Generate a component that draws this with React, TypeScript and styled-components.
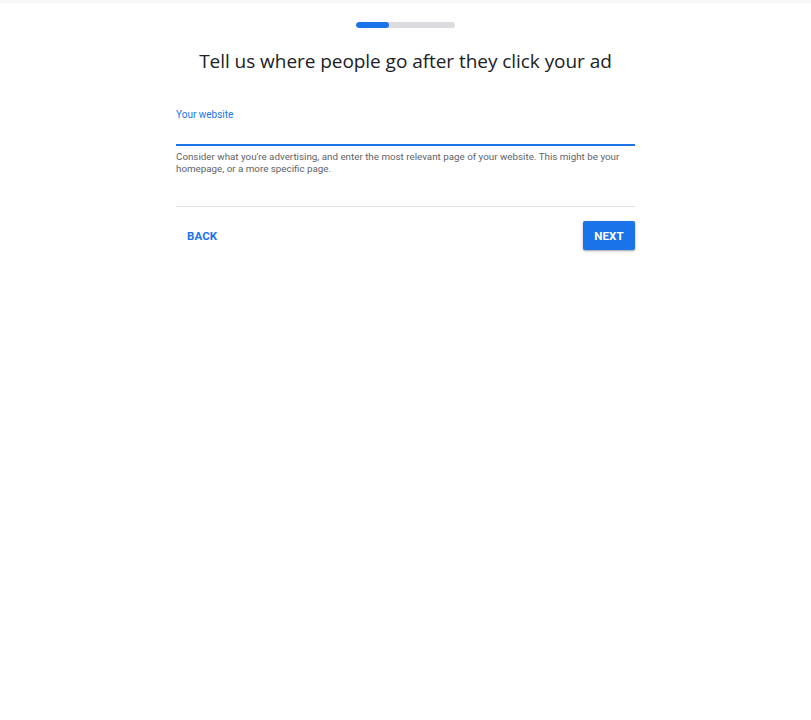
import React from "react";
import styled, { createGlobalStyle } from "styled-components";

const Global = createGlobalStyle`
  html, body { margin: 0; padding: 0; background: #fff; }
  body { font-family: Roboto, "Liberation Sans", Arial, sans-serif; }
`;

const Page = styled.div`
  min-height: 720px;
  display: flex;
  flex-direction: column;
  align-items: center;
  border-top: 3px solid #f6f6f6;
  box-sizing: border-box;
`;

const Progress = styled.div`
  margin-top: 19px;
  width: 99px;
  height: 6px;
  border-radius: 3px;
  background: #dadce0;
  overflow: hidden;
  display: flex;
`;

const ProgressFill = styled.div`
  height: 100%;
  background: #1a73e8;
  border-radius: 3px;
`;

const Title = styled.h1`
  margin: 19px 0 0;
  font-family: "Open Sans", Roboto, sans-serif;
  font-weight: 400;
  font-size: 19px;
  line-height: 28px;
  color: #202124;
  letter-spacing: -0.05px;
`;

const Content = styled.div`
  width: 459px;
  margin-top: 33px;
  display: flex;
  flex-direction: column;
`;

const Label = styled.label`
  font-size: 10px;
  line-height: 14px;
  color: #1a73e8;
`;

const Input = styled.input`
  display: block;
  box-sizing: border-box;
  margin-top: 4px;
  border: none;
  border-bottom: 2px solid #1a73e8;
  height: 20px;
  padding: 0;
  outline: none;
  font: inherit;
  background: transparent;
`;

const Helper = styled.p`
  margin: 5px 0 0;
  font-size: 9.8px;
  line-height: 12px;
  color: #5f6368;
`;

const Divider = styled.div`
  margin-top: 31px;
  height: 1px;
  background: #e0e0e0;
`;

const Actions = styled.div`
  margin-top: 14px;
  display: flex;
  justify-content: space-between;
  align-items: center;
`;

const TextButton = styled.button`
  border: none;
  background: transparent;
  color: #1a73e8;
  font-family: Roboto, sans-serif;
  font-weight: 700;
  font-size: 11.5px;
  letter-spacing: 0.1px;
  padding: 0 11px;
  height: 29px;
  cursor: pointer;
`;

const PrimaryButton = styled(TextButton)`
  background: #1a73e8;
  color: #fff;
  border-radius: 2px;
  padding: 0;
  width: 52px;
  box-shadow: 0 1px 3px rgba(60, 64, 67, 0.35), 0 1px 1px rgba(60, 64, 67, 0.2);
`;

export default function App() {
  return (
    <>
      <Global />
      <Page>
        <Progress>
          <ProgressFill style={{ width: "33%" }} />
        </Progress>
        <Title>Tell us where people go after they click your ad</Title>
        <Content>
          <Label htmlFor="site">Your website</Label>
          <Input id="site" />
          <Helper>
            Consider what you're advertising, and enter the most relevant page of your website. This might be your
            homepage, or a more specific page.
          </Helper>
          <Divider />
          <Actions>
            <TextButton>BACK</TextButton>
            <PrimaryButton>NEXT</PrimaryButton>
          </Actions>
        </Content>
      </Page>
    </>
  );
}
